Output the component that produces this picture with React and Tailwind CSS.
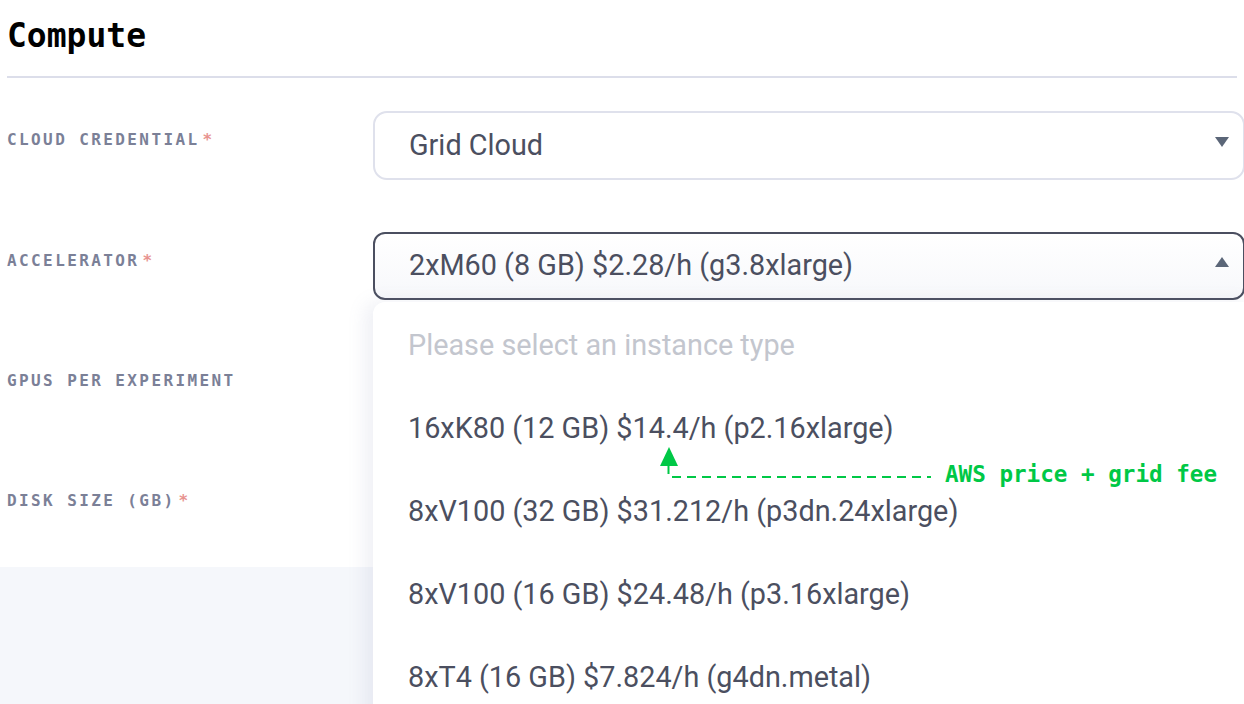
const mono = { fontFamily: '"DejaVu Sans Mono", "Liberation Mono", monospace' };

const options = [
  "16xK80 (12 GB) $14.4/h (p2.16xlarge)",
  "8xV100 (32 GB) $31.212/h (p3dn.24xlarge)",
  "8xV100 (16 GB) $24.48/h (p3.16xlarge)",
  "8xT4 (16 GB) $7.824/h (g4dn.metal)",
];

const Label = ({ text, required }) => (
  <div
    className="w-[366px] shrink-0 pt-[17px] text-[16px] font-bold uppercase tracking-[0.15em] text-[#7b8097]"
    style={mono}
  >
    {text}
    {required && <span className="ml-[3px] text-[#e8938f]">*</span>}
  </div>
);

const Caret = ({ up }) => (
  <svg viewBox="0 0 14 10" className="absolute right-[14px] top-1/2 h-[10px] w-[14px] -translate-y-[9px]">
    {up ? (
      <path d="M7 0 L14 10 L0 10 Z" fill="#5b6678" />
    ) : (
      <path d="M0 0 L14 0 L7 10 Z" fill="#5b6678" />
    )}
  </svg>
);

export default function App() {
  return (
    <div className="relative h-[704px] w-[1244px] overflow-hidden bg-white" style={{ fontFamily: "Roboto, sans-serif" }}>
      <div className="px-[7px]">
        <h2 className="pt-[17px] pb-[21px] text-[33px] font-bold leading-[38px] text-black" style={mono}>
          Compute
        </h2>
        <div className="h-[2px] bg-[#dcdeea]" />

        <div className="flex flex-col gap-[52px] pt-[33px]">
          <div className="flex">
            <Label text="Cloud Credential" required />
            <div className="relative flex h-[69px] w-[872px] shrink-0 items-center rounded-[14px] border-2 border-[#dfe1ec] pl-[34px] text-[28.8px] text-[#4b4f60]">
              Grid Cloud
              <Caret />
            </div>
          </div>

          <div className="flex">
            <Label text="Accelerator" required />
            <div className="relative w-[872px] shrink-0">
              <div className="relative flex h-[68px] items-center rounded-[12px] border-2 border-[#4b4f60] bg-gradient-to-b from-white to-[#f7f8fb] pl-[34px] text-[28.8px] text-[#4b4f60]">
                2xM60 (8 GB) $2.28/h (g3.8xlarge)
                <Caret up />
              </div>
            </div>
          </div>

          <div className="flex">
            <Label text="GPUs per experiment" />
            <div className="h-[68px] w-[872px] shrink-0" />
          </div>

          <div className="flex">
            <Label text="Disk size (GB)" required />
            <div className="h-[68px] w-[872px] shrink-0" />
          </div>
        </div>
      </div>

      <div className="absolute inset-x-0 top-[567px] bottom-0 bg-[#f5f7fb]" />

      <div className="absolute left-[373px] top-[302px] bottom-[-20px] w-[880px] rounded-tl-[12px] bg-white pt-[2px] shadow-[-8px_0_18px_rgba(120,130,170,0.12)]">
        <div className="flex h-[83px] items-center pl-[35px] text-[28.8px] text-[#c3c6ce]">
          Please select an instance type
        </div>
        {options.map((o) => (
          <div key={o} className="flex h-[83px] items-center pl-[35px] text-[28.8px] text-[#4b4f60]">
            {o}
          </div>
        ))}
      </div>

      <div className="absolute left-[659px] top-[447px]">
        <svg width="290" height="34" viewBox="0 0 290 34">
          <path d="M10 0 L19 19 L1 19 Z" fill="#00c846" />
          <line x1="9.5" y1="19" x2="9.5" y2="27" stroke="#00c846" strokeWidth="2" />
          <line x1="13" y1="30" x2="272" y2="30" stroke="#00c846" strokeWidth="2" strokeDasharray="9 6" />
        </svg>
      </div>
      <div
        className="absolute left-[945px] top-[460px] text-[22.6px] font-bold leading-[28px] text-[#00c846]"
        style={mono}
      >
        AWS price + grid fee
      </div>
    </div>
  );
}
